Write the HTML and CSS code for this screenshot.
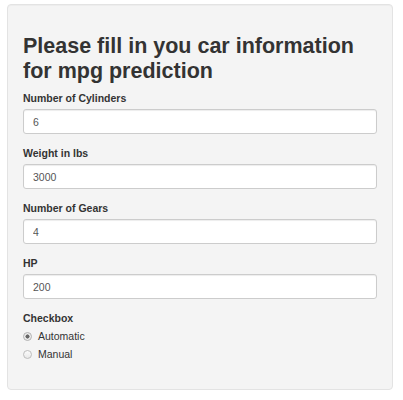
FILE: index.html
```html
<!DOCTYPE html>
<html>
<head>
<meta charset="utf-8">
<link rel="stylesheet" href="styles.css">
</head>
<body>
<div class="page">
  <form class="well">
    <h2 class="title">Please fill in you car information for mpg prediction</h2>
    <div class="group">
      <label class="label">Number of Cylinders</label>
      <input class="field" type="text" value="6">
    </div>
    <div class="group">
      <label class="label">Weight in lbs</label>
      <input class="field" type="text" value="3000">
    </div>
    <div class="group">
      <label class="label">Number of Gears</label>
      <input class="field" type="text" value="4">
    </div>
    <div class="group">
      <label class="label">HP</label>
      <input class="field" type="text" value="200">
    </div>
    <div class="group last">
      <label class="label">Checkbox</label>
      <div class="radios">
        <label class="radio"><input class="dot" type="radio" name="t" checked><span>Automatic</span></label>
        <label class="radio"><input class="dot" type="radio" name="t"><span>Manual</span></label>
      </div>
    </div>
  </form>
</div>
</body>
</html>
```

FILE: styles.css
```css
html, body {
  margin: 0;
  padding: 0;
  background: #ffffff;
}
body {
  font-family: "Liberation Sans", Arial, sans-serif;
  color: #333333;
}
.page {
  padding: 4px 10px 0 7px;
}
.well {
  display: block;
  background: #f4f4f4;
  border: 1px solid #e3e3e3;
  border-radius: 4px;
  padding: 14px 15px 14px 15px;
  box-shadow: inset 0 1px 1px rgba(0,0,0,0.03);
}
.title {
  font-size: 21.5px;
  line-height: 25px;
  font-weight: bold;
  margin: 15px 0 7px 0;
  color: #333;
}
.group {
  display: flex;
  flex-direction: column;
  margin-bottom: 12px;
}
.group.last {
  margin-bottom: 12px;
}
.label {
  font-size: 10.5px;
  line-height: 14px;
  font-weight: bold;
  margin-bottom: 4px;
}
.field {
  box-sizing: border-box;
  height: 25px;
  width: 100%;
  border: 1px solid #cccccc;
  border-radius: 3px;
  background: #fff;
  padding: 0 9px;
  font-family: "Liberation Sans", Arial, sans-serif;
  font-size: 10.5px;
  color: #555;
  margin: 0;
  box-shadow: inset 0 1px 1px rgba(0,0,0,0.075);
}
.radios {
  display: flex;
  flex-direction: column;
  margin-top: -2px;
}
.radio {
  display: flex;
  align-items: center;
  height: 18px;
  font-size: 10.5px;
  color: #333;
}
.dot {
  appearance: none;
  -webkit-appearance: none;
  box-sizing: border-box;
  width: 9px;
  height: 9px;
  margin: 0 6px 0 0;
  border: 1px solid #bdbdbd;
  border-radius: 50%;
  background: linear-gradient(#fbfbfb, #e8e8e8);
}
.dot:checked {
  background: radial-gradient(circle, #666 0, #666 1.8px, #e9e9e9 2.3px, #f6f6f6 100%);
  border-color: #b0b0b0;
}
```
